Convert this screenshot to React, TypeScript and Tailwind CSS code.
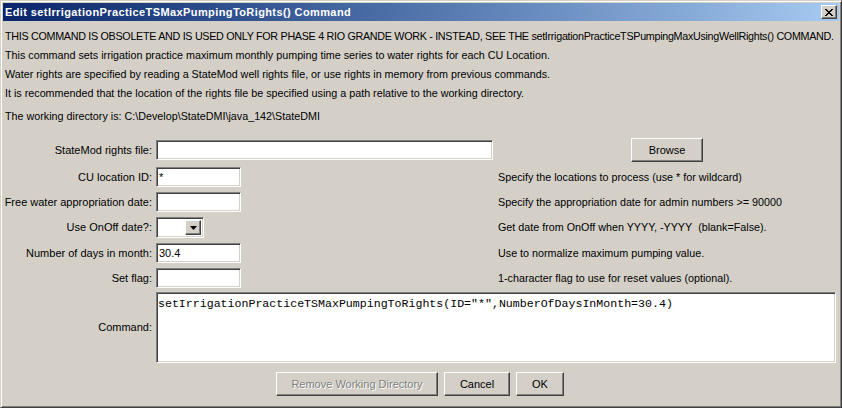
import React from "react";

const sunken =
    "bg-white border border-t-[#808080] border-l-[#808080] border-b-white border-r-white shadow-[inset_1px_1px_0_#404040,inset_-1px_-1px_0_#d4d0c8]";
const raised =
    "bg-[#d4d0c8] border border-t-white border-l-white border-b-[#404040] border-r-[#404040] shadow-[inset_-1px_-1px_0_#808080]";

interface RowProps {
    label: string;
    children: React.ReactNode;
    note?: React.ReactNode;
    h?: string;
}

const Row = ({label, children, note, h = "h-[20px]"}: RowProps) => (
    <div className={`grid grid-cols-[148px_338px_1fr] gap-x-[4px] items-center ${h}`}>
        <span className="text-right whitespace-nowrap">{label}</span>
        <div className="flex items-center">{children}</div>
        <div className="whitespace-nowrap text-[10.75px]">{note}</div>
    </div>
);

const TextBox = ({value = "", w}: { value?: string; w: string }) => (
    <div className={`${sunken} ${w} h-[20px] pl-[2px] flex items-center`}>{value}</div>
);

const App = () => {
    return (
        <div
            className="w-[842px] h-[408px] bg-[#d4d0c8] border border-t-[#d4d0c8] border-l-[#d4d0c8] border-b-[#404040] border-r-[#404040] shadow-[inset_1px_1px_0_#ffffff,inset_-1px_-1px_0_#808080] p-[2px] flex flex-col text-[11px] text-black font-['Liberation_Sans',Arial,sans-serif]">
            {/* title bar */}
            <div className="h-[18px] bg-gradient-to-r from-[#0a246a] to-[#a6caf0] flex items-center pl-[2px] pr-[2px]">
                <span className="text-white font-bold text-[11px] tracking-[0.4px] leading-none whitespace-nowrap">
                    Edit setIrrigationPracticeTSMaxPumpingToRights() Command
                </span>
                <div className={`${raised} ml-auto w-[16px] h-[14px] flex items-center justify-center`}>
                    <svg width="8" height="7" viewBox="0 0 8 7">
                        <path d="M0 0L7 7M1 0L8 7M7 0L0 7M8 0L1 7" stroke="#000" strokeWidth="1"/>
                    </svg>
                </div>
            </div>

            <div className="px-[2px] text-[10.75px] leading-[19px] mt-[6px] whitespace-nowrap">
                <p className="tracking-[-0.3px]">THIS COMMAND IS OBSOLETE AND IS USED ONLY FOR PHASE 4 RIO GRANDE WORK - INSTEAD, SEE THE setIrrigationPracticeTSPumpingMaxUsingWellRights() COMMAND.</p>
                <p>This command sets irrigation practice maximum monthly pumping time series to water rights for each CU Location.</p>
                <p>Water rights are specified by reading a StateMod well rights file, or use rights in memory from previous commands.</p>
                <p>It is recommended that the location of the rights file be specified using a path relative to the working directory.</p>
                <p className="mt-[4px]">The working directory is: C:\Develop\StateDMI\java_142\StateDMI</p>
            </div>

            <div className="flex flex-col gap-[5px] mt-[12px] pl-[1px]">
                <Row label="StateMod rights file:" h="h-[24px]"
                     note={<div className={`${raised} ml-[133px] w-[72px] h-[24px] flex items-center justify-center text-[11px]`}>Browse</div>}>
                    <TextBox w="w-[337px]"/>
                </Row>
                <Row label="CU location ID:" note="Specify the locations to process (use * for wildcard)">
                    <TextBox w="w-[85px]" value="*"/>
                </Row>
                <Row label="Free water appropriation date:"
                     note="Specify the appropriation date for admin numbers >= 90000">
                    <TextBox w="w-[85px]"/>
                </Row>
                <Row label="Use OnOff date?:" h="h-[21px]"
                     note={"Get date from OnOff when YYYY, -YYYY\u00a0\u00a0(blank=False)."}>
                    <div className={`${sunken} w-[48px] h-[21px] flex justify-end p-[2px]`}>
                        <div className={`${raised} w-[16px] h-full flex items-center justify-center`}>
                            <svg width="7" height="4" viewBox="0 0 7 4">
                                <path d="M0 0H7L3.5 4Z" fill="#000"/>
                            </svg>
                        </div>
                    </div>
                </Row>
                <Row label="Number of days in month:" note="Use to normalize maximum pumping value.">
                    <TextBox w="w-[85px]" value="30.4"/>
                </Row>
                <Row label="Set flag:" note="1-character flag to use for reset values (optional).">
                    <TextBox w="w-[85px]"/>
                </Row>
                <div className="grid grid-cols-[148px_1fr] gap-x-[4px] items-center h-[71px] mt-[-1px]">
                    <span className="text-right">Command:</span>
                    <div className={`${sunken} h-[71px] w-[680px] px-[1px] pt-[4px] font-['Liberation_Mono',monospace] text-[11.6px] leading-[14px] whitespace-pre`}>
                        setIrrigationPracticeTSMaxPumpingToRights(ID="*",NumberOfDaysInMonth=30.4)
                    </div>
                </div>
            </div>

            <div className="flex justify-center gap-[6px] mt-[9px] pr-[2px]">
                <div className={`${raised} w-[162px] h-[24px] flex items-center justify-center text-[#808080] [text-shadow:1px_1px_0_#ffffff]`}>
                    Remove Working Directory
                </div>
                <div className={`${raised} w-[66px] h-[24px] flex items-center justify-center`}>Cancel</div>
                <div className={`${raised} w-[48px] h-[24px] flex items-center justify-center`}>OK</div>
            </div>
        </div>
    );
};

export default App;
